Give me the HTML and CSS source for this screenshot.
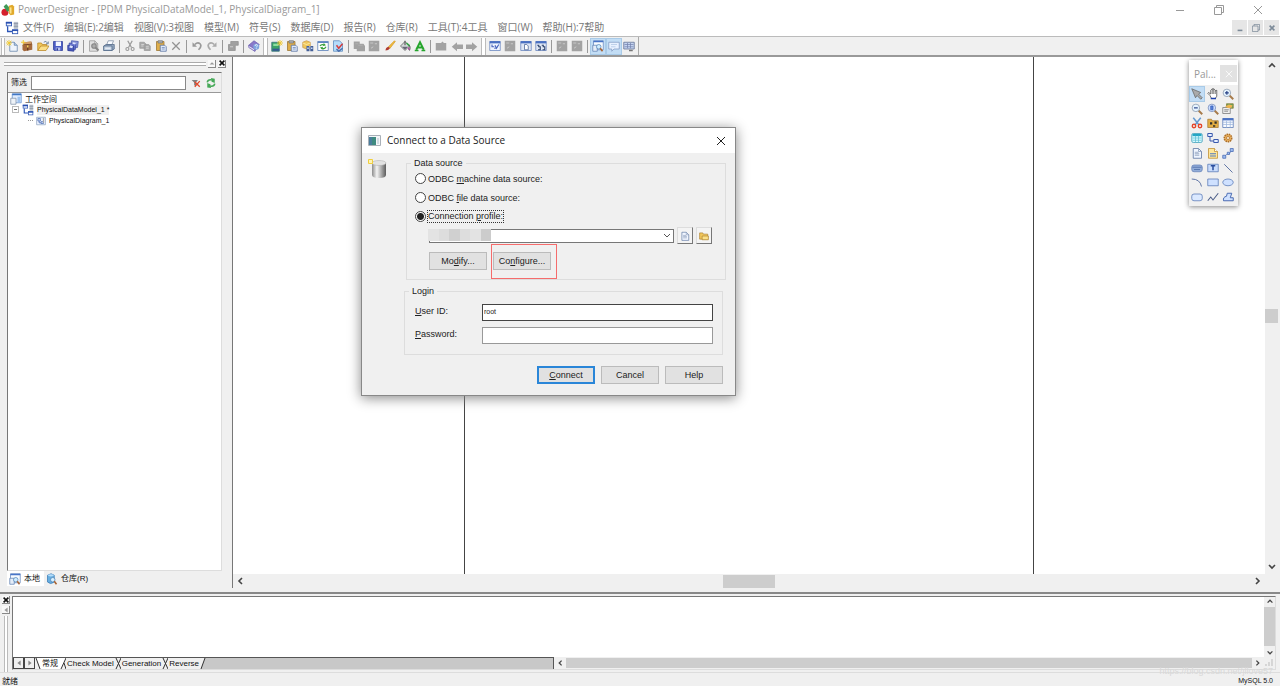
FILE: index.html
```html
<!DOCTYPE html>
<html lang="zh-CN">
<head>
<meta charset="utf-8">
<title>PowerDesigner</title>
<link rel="stylesheet" href="styles.css">
</head>
<body>
<svg class="defs" aria-hidden="true">
  <symbol id="logo" viewBox="0 0 16 16"><circle cx="4.500" cy="10.500" r="4" fill="#d5202c"/><path d="M3 4l3-3 6 7-5 2z" fill="#3f9a58"/><path d="M9 3l4-1 2 2v9l-4 1-2-2z" fill="#e0a92c"/><path d="M10 5h2v7h-2z" fill="#fbe38e"/></symbol>
  <symbol id="model" viewBox="0 0 16 16"><rect x="1.500" y="1.500" width="6" height="4" fill="#eef4ff" stroke="#3158b5"/><path d="M1 2h7" stroke="#2a50b0" stroke-width="2"/><path d="M3 6v6h5" fill="none" stroke="#2c56b8" stroke-width="1.500"/><rect x="8.500" y="10.500" width="6" height="4" fill="#fff" stroke="#3158b5"/><path d="M10 1h5v8h-5z" fill="#b9c1cc"/><path d="M10 3h5M10 6h5" stroke="#8b95a5"/><path d="M8 10.500h7" stroke="#2a50b0" stroke-width="2"/></symbol>
  <symbol id="new" viewBox="0 0 16 16"><path d="M5 3h6l4 4v8H5z" fill="#eef4fc" stroke="#6080a8"/><path d="M11 3v4h4" fill="#b8cde8" stroke="#6080a8"/><path d="M4 0v8M0 4h8M1 1l6 6M7 1L1 7" stroke="#f2cc35" stroke-width="1.200"/></symbol>
  <symbol id="chest" viewBox="0 0 16 16"><path d="M2 7l2-4 10-1 1 4v7L4 15l-2-2z" fill="#a5693c"/><path d="M3 6l11-1M9 6v8" stroke="#5b3018" stroke-width="1.500"/><path d="M4 3l9-1 1 3-11 1z" fill="#d19a63"/><path d="M3 0v6M0 3h6" stroke="#f2cc35" stroke-width="1.300"/><path d="M8 7h2v3H8z" fill="#f3ce62"/></symbol>
  <symbol id="open" viewBox="0 0 16 16"><path d="M1 14V4h5l1 2h6v3" fill="#f1c75c" stroke="#b98522"/><path d="M1 14l4-6h11l-4 6z" fill="#fbdf88" stroke="#b98522"/><path d="M9 3q3-3 5 1m1-2v3h-3" fill="none" stroke="#48658d"/></symbol>
  <symbol id="folder" viewBox="0 0 16 16"><path d="M1 13V3h5l1 2h7v8z" fill="#f1c75c" stroke="#a67a25"/><path d="M5 8h10v6H5z" fill="#fbe08a" stroke="#a67a25"/></symbol>
  <symbol id="save" viewBox="0 0 16 16"><path d="M2 2h12v12H3l-1-1z" fill="#4b5cc4" stroke="#2d3c98"/><path d="M5 2h7v6H5z" fill="#f3f6ff"/><path d="M5 10h6v4H5z" fill="#b9c3ee"/><path d="M6 11h2v3H6z" fill="#2d3c98"/></symbol>
  <symbol id="saveall" viewBox="0 0 16 16"><path d="M6 1l9 1-1 8-9 1z" fill="#8d98dc" stroke="#4655aa"/><path d="M3 4l9 1-1 8-9 1z" fill="#6b79d1" stroke="#3948a2"/><path d="M1 7l8 1v7l-8-1z" fill="#4959b9" stroke="#2d3c98"/><path d="M4 7l4 1-1 3-4-1zM8 3l4 1-1 2-4-1z" fill="#dfe6ff"/></symbol>
  <symbol id="preview" viewBox="0 0 16 16"><path d="M2 1h7l4 4v10H2z" fill="#dedede" stroke="#989898"/><path d="M9 1v4h4" fill="none" stroke="#989898"/><circle cx="8" cy="8" r="3" fill="#aaa" stroke="#858585" stroke-width="1.500"/><path d="M10 10l4 4" stroke="#858585" stroke-width="2.500"/></symbol>
  <symbol id="print" viewBox="0 0 16 16"><path d="M5 6l2-5h7l-2 5z" fill="#f8fbff" stroke="#7c8ba0"/><path d="M1 8l3-2h11v6l-3 2H1z" fill="#93a6be" stroke="#526a88"/><path d="M1 8h11v6H1z" fill="#c2d0e1" stroke="#526a88"/><path d="M3 11h7" stroke="#fff"/></symbol>
  <symbol id="cut" viewBox="0 0 16 16"><path d="M5 1l5 9M11 1L6 10" stroke="#9a9a9a" stroke-width="1.700"/><circle cx="4.500" cy="12" r="2" fill="none" stroke="#9a9a9a" stroke-width="1.500"/><circle cx="11.500" cy="12" r="2" fill="none" stroke="#9a9a9a" stroke-width="1.500"/></symbol>
  <symbol id="copy" viewBox="0 0 16 16"><path d="M1 3h6l2 2v6H1zM7 6h6l2 2v6H7z" fill="#aaa" stroke="#9a9a9a"/><path d="M3 6h4M3 8h3M9 9h4M9 11h4" stroke="#ddd"/></symbol>
  <symbol id="paste" viewBox="0 0 16 16"><path d="M2 2h10v12H2z" fill="#dfae4a" stroke="#9b7430"/><path d="M4 1h6v3H4z" fill="#aab0b8" stroke="#777"/><path d="M7 7h6l2 2v6H7z" fill="#dfe9fb" stroke="#536e9c"/><path d="M9 10h4M9 12h4" stroke="#6b87b5"/></symbol>
  <symbol id="del" viewBox="0 0 16 16"><path d="M3 3l10 10M13 3L3 13" stroke="#929292" stroke-width="1.700"/></symbol>
  <symbol id="undo" viewBox="0 0 16 16"><path d="M5 6q4-4 7-1 3 3-2 8" fill="none" stroke="#999" stroke-width="2.300"/><path d="M2 3v6h6z" fill="#999"/></symbol>
  <symbol id="redo" viewBox="0 0 16 16"><path d="M11 6Q7 2 4 5q-3 3 2 8" fill="none" stroke="#aaa" stroke-width="2.300"/><path d="M14 3v6H8z" fill="#aaa"/></symbol>
  <symbol id="prop" viewBox="0 0 16 16"><path d="M5 2h10v5h-4v7H2V6h3z" fill="#a0a0a0" stroke="#8f8f8f"/><path d="M4 9h4" stroke="#ddd"/></symbol>
  <symbol id="help" viewBox="0 0 16 16"><path d="M1 7l7-6 7 5-6 9z" fill="#8778c9" stroke="#6a5cb0"/><path d="M1 7l8 5v3L1 10z" fill="#ded8f5" stroke="#6a5cb0"/><circle cx="11" cy="9" r="4" fill="#7ea4df"/><path d="M9.500 8q0-2 1.500-2t1.500 1.500T11 9.500M11 11v1" fill="none" stroke="#fff"/></symbol>
  <symbol id="green" viewBox="0 0 16 16"><path d="M1 3h10v12H1z" fill="#3ba466" stroke="#376c79"/><path d="M3 5h7v3H3z" fill="#8ddca2"/><path d="M2 13h9" stroke="#355b91" stroke-width="3"/><path d="M12 0v8M8 4h8M9 1l6 6M15 1L9 7" stroke="#efc832" stroke-width="1.200"/></symbol>
  <symbol id="find" viewBox="0 0 16 16"><path d="M1 3l5-2 5 2v7l-5 2-5-2z" fill="#f0c85c" stroke="#c9984a"/><path d="M1 4l5 2 5-2" fill="none" stroke="#fff0b5"/><rect x="6" y="8" width="4" height="7" fill="#456098"/><rect x="11" y="8" width="4" height="7" fill="#456098"/><path d="M7 11h2M12 11h2M10 9h1" stroke="#c4d8f8" stroke-width="2"/></symbol>
  <symbol id="refresh" viewBox="0 0 16 16"><path d="M1 2h14v12H1z" fill="#fff" stroke="#5078b6"/><path d="M1 3h14" stroke="#5e86c2" stroke-width="2"/><path d="M4 8q2-3 6-1M12 9q-2 4-6 2" fill="none" stroke="#37a03c" stroke-width="1.700"/><path d="M9 4l3 3-4 1zM7 13l-3-3 4-1z" fill="#37a03c"/></symbol>
  <symbol id="check" viewBox="0 0 16 16"><path d="M2 1h8l4 4v10H2z" fill="#b5dcfa" stroke="#5887bb"/><path d="M6 7l3 4 5-6" fill="none" stroke="#d73d3d" stroke-width="2"/><path d="M6 12l3 3 5-4" fill="none" stroke="#4c70ae" stroke-width="2"/></symbol>
  <symbol id="gcopy" viewBox="0 0 16 16"><path d="M1 2h8v3h5l2 3v7H5v-3H1z" fill="#a2a2a2"/><path d="M3 5h4M7 7h6" stroke="#b4b4b4"/></symbol>
  <symbol id="gbox" viewBox="0 0 16 16"><path d="M1 1h14v14H1z" fill="#a2a2a2"/><path d="M3 4h4M9 5h3M4 11l3-2" fill="none" stroke="#d4d4d4"/></symbol>
  <symbol id="brush" viewBox="0 0 16 16"><path d="M6 9l8-8 1 1-7 9z" fill="#f4bd35" stroke="#d09a30"/><path d="M2 14q0-4 4-5l2 2q-2 3-6 3z" fill="#b13b30"/></symbol>
  <symbol id="fill" viewBox="0 0 16 16"><path d="M2 8l6-6 6 6-6 6z" fill="#d5d8db" stroke="#555"/><path d="M8 7V1M12 5q4 3 2 9" fill="none" stroke="#444" stroke-width="1.300"/><path d="M4 9h8l-4 4z" fill="#667"/><path d="M10 4l4 4" stroke="#36a948" stroke-width="2"/><path d="M12 10h2v3h-2z" fill="#b248a0"/></symbol>
  <symbol id="font" viewBox="0 0 16 16"><path d="M3 13L8 3l5 10M5 10h6" fill="none" stroke="#25a52c" stroke-width="2.600"/><path d="M1 14h5M10 14h5" stroke="#25a52c" stroke-width="2"/></symbol>
  <symbol id="gfold" viewBox="0 0 16 16"><path d="M1 4h7l2-2 2 2h3v10H1z" fill="#a2a2a2"/></symbol>
  <symbol id="gleft" viewBox="0 0 16 16"><path d="M1 9l7-6v3h8v6H8v3z" fill="#a2a2a2"/></symbol>
  <symbol id="gright" viewBox="0 0 16 16"><path d="M15 9L8 3v3H0v6h8v3z" fill="#a2a2a2"/></symbol>
  <symbol id="win1" viewBox="0 0 16 16"><path d="M1 2h14v12H1z" fill="#f0f5ff" stroke="#6583bd"/><path d="M1 3h14" stroke="#4a70c2" stroke-width="3"/><path d="M4 6v3h3M8 7l2 4 3-5M7 11h2" fill="none" stroke="#4664bd" stroke-width="1.500"/></symbol>
  <symbol id="win2" viewBox="0 0 16 16"><path d="M1 2h14v12H1z" fill="#dfe7f4" stroke="#6583bd"/><path d="M1 3h14" stroke="#4a70c2" stroke-width="3"/><path d="M6 6h3l2 2v5H6z" fill="#fff" stroke="#486394"/></symbol>
  <symbol id="win3" viewBox="0 0 16 16"><path d="M1 2h14v12H1z" fill="#dfe7f4" stroke="#6583bd"/><path d="M1 3h14" stroke="#4a70c2" stroke-width="3"/><path d="M3 7h2v2h2v4H4M9 7h2v2h2v4h-3" fill="none" stroke="#30456e" stroke-width="1.500"/></symbol>
  <symbol id="browser" viewBox="0 0 16 16"><path d="M2 1h13v12H2z" fill="#f7fbff" stroke="#6688bd"/><path d="M2 2h13" stroke="#4875c8" stroke-width="2"/><path d="M1 7h6v8H1z" fill="#e5edf8" stroke="#6081b2"/><circle cx="9" cy="9" r="3" fill="#cfecff" stroke="#5786b6"/><path d="M11 11l3 4" stroke="#a96331" stroke-width="2"/></symbol>
  <symbol id="output" viewBox="0 0 16 16"><path d="M1 3h14v9H8l-3 3v-3H1z" fill="#e8f1ff" stroke="#8199c2"/><path d="M4 6h8M4 9h6" stroke="#b0c6e4"/></symbol>
  <symbol id="list" viewBox="0 0 16 16"><path d="M1 3h14v9H1z" fill="#c5d4f0" stroke="#5d6c90"/><path d="M2 6h12M2 9h12M6 4v7M10 4v7" stroke="#7584b0"/><path d="M8 13h5v2H8z" fill="#777"/></symbol>
  <symbol id="filter" viewBox="0 0 16 16"><path d="M1 3h10L8 7v7l-3-3V7z" fill="#818181"/><path d="M6 6l8 8M14 5L6 14" stroke="#e3482a" stroke-width="2"/></symbol>
  <symbol id="sync" viewBox="0 0 16 16"><path d="M2 7q1-5 7-4M14 9q-1 5-7 4" fill="none" stroke="#46a958" stroke-width="2.500"/><path d="M8 0l6 1v7L9 6zM8 16l-6-1V8l5 2z" fill="#46a958"/></symbol>
  <symbol id="workspace" viewBox="0 0 16 16"><path d="M3 1h12v12H3z" fill="#e1eeff" stroke="#6090cf"/><path d="M3 2h12" stroke="#4077c5" stroke-width="2"/><path d="M10 5h4v7h-4z" fill="#9fc3ef"/><path d="M1 7h7v8H1z" fill="#eef3f8" stroke="#8292a8"/></symbol>
  <symbol id="diagram" viewBox="0 0 16 16"><path d="M1 2h14v12H1z" fill="#edf4ff" stroke="#7d94b5"/><path d="M3 4h4v4H3zM8 9h4v3H8zM5 8v3h3" fill="#c9daf8" stroke="#395ca9"/><path d="M12 3v8" stroke="#aaa" stroke-width="2"/></symbol>
  <symbol id="repo" viewBox="0 0 16 16"><path d="M2 3q5-4 9 0v9q-5 4-9 0z" fill="#67aee0" stroke="#397bb6"/><ellipse cx="6.500" cy="3" rx="4" ry="1.500" fill="#b6ddfa"/><circle cx="9" cy="9" r="3" fill="#d9f1ff" stroke="#5786b6"/><path d="M11 11l3 4" stroke="#a96331" stroke-width="2"/></symbol>
  <symbol id="pointer" viewBox="0 0 16 16"><path d="M1 1l12 5-3 2 5 5-2 2-5-5-2 3z" fill="#aaa" stroke="#666"/></symbol>
  <symbol id="hand" viewBox="0 0 16 16"><path d="M4 10L1 7l1-1 3 2V3l1-1 1 1V1h2v2l1-1 1 1v1l2-1v8l-2 3H6z" fill="#fff" stroke="#444"/><path d="M7 3v5M9 3v5M11 4v4" stroke="#555"/><path d="M5 13h7v2H5z" fill="#1c3faa"/></symbol>
  <symbol id="zin" viewBox="0 0 16 16"><path d="M10 10l5 5" stroke="#a77b4b" stroke-width="2.500"/><circle cx="6.500" cy="6.500" r="5" fill="#e6f4ff" stroke="#8596aa"/><path d="M4 6.500h5M6.500 4v5" stroke="#223c83" stroke-width="1.500"/></symbol>
  <symbol id="zout" viewBox="0 0 16 16"><path d="M10 10l5 5" stroke="#a77b4b" stroke-width="2.500"/><circle cx="6.500" cy="6.500" r="5" fill="#e6f4ff" stroke="#8596aa"/><path d="M4 6.500h5" stroke="#223c83" stroke-width="1.500"/></symbol>
  <symbol id="zfit" viewBox="0 0 16 16"><path d="M10 10l5 5" stroke="#a77b4b" stroke-width="2.500"/><circle cx="6.500" cy="6.500" r="5" fill="#cfe0ff" stroke="#7187b5"/><path d="M5 4h3v5H5z" fill="#5d87dc" stroke="#3159b5"/></symbol>
  <symbol id="pprop" viewBox="0 0 16 16"><path d="M6 1h9v6H6z" fill="#67a45b" stroke="#8c7c3a"/><path d="M1 6h10v8H1z" fill="#eee" stroke="#777"/><path d="M3 9h6M3 11h5" stroke="#777"/><path d="M4 5l5-3 5 1-1 3-4 1z" fill="#efb550"/></symbol>
  <symbol id="pcut" viewBox="0 0 16 16"><path d="M3 1l8 10M13 1L5 11" stroke="#669ad0" stroke-width="2"/><circle cx="4" cy="12" r="2.300" fill="none" stroke="#e44429" stroke-width="1.800"/><circle cx="12" cy="12" r="2.300" fill="none" stroke="#e44429" stroke-width="1.800"/></symbol>
  <symbol id="package" viewBox="0 0 16 16"><path d="M1 3h5l1 2h8v9H1z" fill="#e5af43" stroke="#a67a30"/><path d="M4 7h3v3H4zM10 6h3v3h-3zM8 11h3v2H8z" fill="#30302c"/></symbol>
  <symbol id="table" viewBox="0 0 16 16"><path d="M1 2h14v12H1z" fill="#f8fbff" stroke="#5577b4"/><path d="M1 3h14" stroke="#4a72c3" stroke-width="3"/><path d="M1 7h14M1 10h14M6 5v9M11 5v9" stroke="#9fb7dc"/></symbol>
  <symbol id="view" viewBox="0 0 16 16"><rect x="1" y="2" width="14" height="12" rx="2" fill="#d5faff" stroke="#3b99b6"/><path d="M2 4h12" stroke="#24a6c4" stroke-width="3"/><path d="M2 8h12M2 11h12M6 5v9M10 5v9" stroke="#62bfd5"/></symbol>
  <symbol id="link" viewBox="0 0 16 16"><path d="M4 6v6h5" fill="none" stroke="#3455ac" stroke-width="1.300"/><path d="M1 2h6v4H1zM9 10h6v4H9z" fill="#e8f0ff" stroke="#3455ac" stroke-width="1.300"/></symbol>
  <symbol id="gear" viewBox="0 0 16 16"><circle cx="8" cy="8" r="5" fill="#e8ae5c" stroke="#ad6f27" stroke-width="2" stroke-dasharray="2 1"/><circle cx="8" cy="8" r="2" fill="#fff4df" stroke="#ad6f27"/></symbol>
  <symbol id="file" viewBox="0 0 16 16"><path d="M3 2h7l4 4v9H3z" fill="#f1f6ff" stroke="#536e9c"/><path d="M10 2v4h4M5 7h5M5 9h6M5 11h6" fill="none" stroke="#8396b5"/></symbol>
  <symbol id="note" viewBox="0 0 16 16"><path d="M2 2h8l4 4v9H2z" fill="#ffe69a" stroke="#bf8c2e"/><path d="M10 2v4h4" fill="#fff" stroke="#bf8c2e"/><path d="M4 9h8M4 12h8" stroke="#527bbf" stroke-width="1.500"/></symbol>
  <symbol id="conn" viewBox="0 0 16 16"><path d="M3 13l4-4 3 0 3-5" fill="none" stroke="#6484bf"/><path d="M1 11h4v4H1zM7 7h3v3H7zM11 2h4v4h-4z" fill="#9dbcf0" stroke="#4668b1"/></symbol>
  <symbol id="titlei" viewBox="0 0 16 16"><rect x="1" y="4" width="14" height="9" rx="3" fill="#91acd8" stroke="#6480b8"/><path d="M2 7h12M4 10h8" stroke="#4a69a6"/></symbol>
  <symbol id="texti" viewBox="0 0 16 16"><path d="M1 3h14v10H1z" fill="#c9dcfb" stroke="#5577b4"/><path d="M5 5h6M8 5v6" stroke="#2a4d9e" stroke-width="2"/></symbol>
  <symbol id="line" viewBox="0 0 16 16"><path d="M3 3l11 11" stroke="#5e73a4" stroke-width="1.300"/></symbol>
  <symbol id="arc" viewBox="0 0 16 16"><path d="M1 4q11 0 13 10" fill="none" stroke="#5e73a4" stroke-width="1.300"/></symbol>
  <symbol id="rect" viewBox="0 0 16 16"><path d="M1 4h14v9H1z" fill="#cfe1ff" stroke="#5577b4"/></symbol>
  <symbol id="ell" viewBox="0 0 16 16"><ellipse cx="8" cy="8.500" rx="7" ry="4.500" fill="#cfe1ff" stroke="#5577b4"/></symbol>
  <symbol id="rrect" viewBox="0 0 16 16"><rect x="1" y="4" width="14" height="9" rx="3" fill="#dbe9ff" stroke="#5577b4"/></symbol>
  <symbol id="poly" viewBox="0 0 16 16"><path d="M1 13l4-5 3 4 7-9" fill="none" stroke="#4b5d88" stroke-width="1.400"/></symbol>
  <symbol id="polygon" viewBox="0 0 16 16"><path d="M2 13q-1-5 4-6l1-4h6l-2 6h4v4z" fill="#cfe1ff" stroke="#4668b1" stroke-width="1.300"/></symbol>
  <symbol id="x" viewBox="0 0 10 10"><path d="M1 1l8 8M9 1L1 9" stroke="currentColor" fill="none"/></symbol>
  <symbol id="xb" viewBox="0 0 10 10"><path d="M2 2l6 6M8 2L2 8" stroke="currentColor" stroke-width="2" fill="none"/></symbol>
  <symbol id="up" viewBox="0 0 10 10"><path d="M2 7l3-3 3 3" stroke="currentColor" stroke-width="1.600" fill="none"/></symbol>
  <symbol id="down" viewBox="0 0 10 10"><path d="M2 3l3 3 3-3" stroke="currentColor" stroke-width="1.600" fill="none"/></symbol>
  <symbol id="chev" viewBox="0 0 10 10"><path d="M2 3l3 3 3-3" stroke="currentColor" fill="none"/></symbol>
  <symbol id="left" viewBox="0 0 10 10"><path d="M7 2L4 5l3 3" stroke="currentColor" stroke-width="1.600" fill="none"/></symbol>
  <symbol id="right" viewBox="0 0 10 10"><path d="M3 2l3 3-3 3" stroke="currentColor" stroke-width="1.600" fill="none"/></symbol>
  <symbol id="tl" viewBox="0 0 10 10"><path d="M7 2v6L3 5z" fill="currentColor"/></symbol>
  <symbol id="tr" viewBox="0 0 10 10"><path d="M3 2v6l4-3z" fill="currentColor"/></symbol>
  <symbol id="tu" viewBox="0 0 10 10"><path d="M2 7h6L5 4z" fill="currentColor"/></symbol>
  <symbol id="min" viewBox="0 0 10 10"><path d="M1 5.500h8" stroke="currentColor"/></symbol>
  <symbol id="minb" viewBox="0 0 10 10"><path d="M2 8h6" stroke="currentColor" stroke-width="2"/></symbol>
  <symbol id="restore" viewBox="0 0 10 10"><path d="M.5 2.500h7v7h-7zM2.500 2.500v-2h7v7h-2" stroke="currentColor" fill="none"/></symbol>
</svg>

<header class="titlebar">
  <svg class="i16"><use href="#logo"/></svg>
  <h1 class="app-title">PowerDesigner - [PDM PhysicalDataModel_1, PhysicalDiagram_1]</h1>
  <div class="win-controls">
    <button aria-label="最小化"><svg class="i10"><use href="#min"/></svg></button>
    <button aria-label="还原"><svg class="i10"><use href="#restore"/></svg></button>
    <button aria-label="关闭"><svg class="i10"><use href="#x"/></svg></button>
  </div>
</header>

<nav class="menubar">
  <svg class="i16"><use href="#model"/></svg>
  <button>文件(F)</button><button>编辑(E):2编辑</button><button>视图(V):3视图</button><button>模型(M)</button><button>符号(S)</button><button>数据库(D)</button><button>报告(R)</button><button>仓库(R)</button><button>工具(T):4工具</button><button>窗口(W)</button><button>帮助(H):7帮助</button>
  <div class="child-controls">
    <button aria-label="最小化"><svg class="i8"><use href="#minb"/></svg></button>
    <button aria-label="还原"><svg class="i8"><use href="#restore"/></svg></button>
    <button aria-label="关闭"><svg class="i8"><use href="#xb"/></svg></button>
  </div>
</nav>

<div class="toolbar">
  <span class="grip first"></span>
  <div class="group n5"><button><svg><use href="#new"/></svg></button><button><svg><use href="#chest"/></svg></button><button><svg><use href="#open"/></svg></button><button><svg><use href="#save"/></svg></button><button><svg><use href="#saveall"/></svg></button></div>
  <span class="sep"></span>
  <div class="group n2"><button><svg><use href="#preview"/></svg></button><button><svg><use href="#print"/></svg></button></div>
  <span class="sep"></span>
  <div class="group n4"><button><svg><use href="#cut"/></svg></button><button><svg><use href="#copy"/></svg></button><button><svg><use href="#paste"/></svg></button><button><svg><use href="#del"/></svg></button></div>
  <span class="sep"></span>
  <div class="group n2"><button><svg><use href="#undo"/></svg></button><button><svg><use href="#redo"/></svg></button></div>
  <span class="sep"></span>
  <div class="group"><button><svg><use href="#prop"/></svg></button></div>
  <span class="sep"></span>
  <div class="group"><button><svg><use href="#help"/></svg></button></div>
  <span class="grip"></span>
  <div class="group n5"><button><svg><use href="#green"/></svg></button><button><svg><use href="#paste"/></svg></button><button><svg><use href="#find"/></svg></button><button><svg><use href="#refresh"/></svg></button><button><svg><use href="#check"/></svg></button></div>
  <span class="sep"></span>
  <div class="group n5"><button><svg><use href="#gcopy"/></svg></button><button><svg><use href="#gbox"/></svg></button><button><svg><use href="#brush"/></svg></button><button><svg><use href="#fill"/></svg></button><button><svg><use href="#font"/></svg></button></div>
  <span class="sep"></span>
  <div class="group n3"><button><svg><use href="#gfold"/></svg></button><button><svg><use href="#gleft"/></svg></button><button><svg><use href="#gright"/></svg></button></div>
  <span class="grip"></span>
  <div class="group n4"><button><svg><use href="#win1"/></svg></button><button><svg><use href="#gbox"/></svg></button><button><svg><use href="#win2"/></svg></button><button><svg><use href="#win3"/></svg></button></div>
  <span class="sep"></span>
  <div class="group n2"><button><svg><use href="#gbox"/></svg></button><button><svg><use href="#gbox"/></svg></button></div>
  <span class="sep"></span>
  <div class="group n3"><button class="on"><svg><use href="#browser"/></svg></button><button class="on"><svg><use href="#output"/></svg></button><button><svg><use href="#list"/></svg></button></div>
  <span class="bar-end"></span>
</div>

<main class="workarea">
  <aside class="browser-pane">
    <div class="pane-head"><span class="pane-grip"></span><button aria-label="收起"><svg class="i8"><use href="#tu"/></svg></button><button aria-label="关闭"><svg class="i8"><use href="#xb"/></svg></button></div>
    <div class="tree-box">
      <div class="filter-row">
        <label for="filter-text">筛选</label><input id="filter-text" type="text">
        <button aria-label="清除筛选"><svg class="i10"><use href="#filter"/></svg></button><button aria-label="刷新"><svg class="i10"><use href="#sync"/></svg></button>
      </div>
      <ul class="tree">
        <li><svg class="i12"><use href="#workspace"/></svg><span class="cjk">工作空间</span></li>
        <li class="lv1"><span class="expander"></span><svg class="i12"><use href="#model"/></svg><span class="sel">PhysicalDataModel_1 *</span></li>
        <li class="lv2"><span class="branch"></span><svg class="i10"><use href="#diagram"/></svg><span>PhysicalDiagram_1</span></li>
      </ul>
    </div>
    <div class="pane-tabs">
      <button class="active"><svg class="i12"><use href="#browser"/></svg>本地</button><button><svg class="i12"><use href="#repo"/></svg>仓库(R)</button>
    </div>
  </aside>

  <section class="canvas">
    <div class="sheet-area"><div class="sheet"></div></div>
    <div class="vscroll"><svg class="i10"><use href="#up"/></svg><span class="thumb"></span><svg class="i10"><use href="#down"/></svg></div>
    <div class="hscroll"><svg class="i10"><use href="#left"/></svg><span class="thumb"></span><svg class="i10"><use href="#right"/></svg></div>
  </section>
</main>

<section class="output-pane">
  <div class="output-side"><button aria-label="关闭"><svg class="i8"><use href="#xb"/></svg></button><button aria-label="收起"><svg class="i8"><use href="#tl"/></svg></button><span class="side-grip"></span></div>
  <div class="output-box">
    <div class="output-text"></div>
    <div class="output-vscroll"><svg class="i8"><use href="#up"/></svg><span class="thumb"></span><svg class="i8"><use href="#down"/></svg></div>
    <div class="output-foot">
      <div class="sheet-tabs">
        <button class="nav" aria-label="上一个"><svg class="i8"><use href="#tl"/></svg></button><button class="nav" aria-label="下一个"><svg class="i8"><use href="#tr"/></svg></button>
        <svg class="slash" viewBox="0 0 6 11"><path d="M0 0h6v11H6z" fill="#fff"/><path d="M1 0l4 11" stroke="#333"/></svg><button class="tab cur">常规</button><svg class="slash" viewBox="0 0 6 11"><path d="M0 0h6L1 11H0z" fill="#fff"/><path d="M6 0L1 11M4 5l2 6" stroke="#333"/></svg><button class="tab">Check Model</button><svg class="slash" viewBox="0 0 6 11"><path d="M6 0L1 11M1 0l5 11" stroke="#333"/></svg><button class="tab">Generation</button><svg class="slash" viewBox="0 0 6 11"><path d="M6 0L1 11M1 0l5 11" stroke="#333"/></svg><button class="tab">Reverse</button><svg class="slash last" viewBox="0 0 6 11"><path d="M0 0h5L1 11H0z" fill="#f0f0f0"/><path d="M5 0L1 11" stroke="#333"/></svg>
      </div>
      <div class="output-hscroll"><svg class="i8"><use href="#left"/></svg><span class="thumb"></span><svg class="i8"><use href="#right"/></svg></div>
    </div>
    <svg class="sizer" viewBox="0 0 10 10"><path d="M2 7v2M5 5v4M8 2v7" stroke="#bbb"/></svg>
  </div>
</section>

<footer class="statusbar"><span class="cjk">就绪</span><span class="dbms">MySQL 5.0</span></footer>
<div class="watermark">https://blog.csdn.net/jllove57</div>

<aside class="palette">
  <div class="palette-head"><span>Pal...</span><button aria-label="关闭"><svg class="i8"><use href="#x"/></svg></button></div>
  <div class="palette-grid">
    <button class="on"><svg><use href="#pointer"/></svg></button><button><svg><use href="#hand"/></svg></button><button><svg><use href="#zin"/></svg></button>
    <button><svg><use href="#zout"/></svg></button><button><svg><use href="#zfit"/></svg></button><button><svg><use href="#pprop"/></svg></button>
    <button><svg><use href="#pcut"/></svg></button><button><svg><use href="#package"/></svg></button><button><svg><use href="#table"/></svg></button>
    <button><svg><use href="#view"/></svg></button><button><svg><use href="#link"/></svg></button><button><svg><use href="#gear"/></svg></button>
    <button><svg><use href="#file"/></svg></button><button><svg><use href="#note"/></svg></button><button><svg><use href="#conn"/></svg></button>
    <button><svg><use href="#titlei"/></svg></button><button><svg><use href="#texti"/></svg></button><button><svg><use href="#line"/></svg></button>
    <button><svg><use href="#arc"/></svg></button><button><svg><use href="#rect"/></svg></button><button><svg><use href="#ell"/></svg></button>
    <button><svg><use href="#rrect"/></svg></button><button><svg><use href="#poly"/></svg></button><button><svg><use href="#polygon"/></svg></button>
  </div>
</aside>

<form class="dialog" role="dialog" aria-label="Connect to a Data Source">
  <div class="dialog-head">
    <svg class="dialog-icon" viewBox="0 0 13 11"><path d="M.5.5h12v10H.5z" fill="#f4f6f8" stroke="#a9b0b8"/><path d="M1 2h7v8H1z" fill="#3f8a80"/><path d="M1 2h3v8H1z" fill="#4a7d9c"/><path d="M9 3h2v6H9z" fill="#d3dbe3"/></svg>
    <h2>Connect to a Data Source</h2>
    <button type="button" aria-label="关闭"><svg class="i10"><use href="#x"/></svg></button>
  </div>
  <div class="dialog-main">
    <svg class="db" viewBox="0 0 19 22"><defs><linearGradient id="cyl"><stop offset="0" stop-color="#8c8c8c"/><stop offset=".35" stop-color="#f4f4f4"/><stop offset="1" stop-color="#5c5c5c"/></linearGradient></defs><path d="M4 5v12q0 3 7 3t7-3V5z" fill="url(#cyl)"/><ellipse cx="11" cy="5" rx="7" ry="2.500" fill="#e2e2e2" stroke="#aaa" stroke-width=".5"/><path d="M.500 1.500h4v4h-4z" fill="#fdf3b5" stroke="#f0cf3e"/></svg>
    <div class="dialog-fields">
      <fieldset class="source">
        <legend>Data source</legend>
        <label class="radio"><input type="radio" name="src"><span>ODBC <u>m</u>achine data source:</span></label>
        <label class="radio"><input type="radio" name="src"><span>ODBC <u>f</u>ile data source:</span></label>
        <label class="radio"><input type="radio" name="src" checked><span class="focus">Connection <u>p</u>rofile:</span></label>
        <div class="profile-row">
          <div class="combo"><select aria-label="Connection profile"><option></option></select><svg class="i10"><use href="#chev"/></svg><span class="mosaic"><i></i><i></i><i></i><i></i><i></i><i></i></span></div>
          <button type="button" class="pick" aria-label="选择文件"><svg class="i10"><use href="#file"/></svg></button><button type="button" class="pick" aria-label="选择目录"><svg class="i10"><use href="#folder"/></svg></button>
        </div>
        <div class="config-row"><button type="button" class="btn">Mo<u>d</u>ify...</button><span class="marked"><button type="button" class="btn">Co<u>n</u>figure...</button></span></div>
      </fieldset>
      <fieldset class="login">
        <legend>Login</legend>
        <label for="uid"><span><u>U</u>ser ID:</span></label><input id="uid" class="strong" type="text" value="root">
        <label for="pwd"><span><u>P</u>assword:</span></label><input id="pwd" type="password">
      </fieldset>
    </div>
  </div>
  <div class="dialog-actions"><button type="button" class="btn default"><u>C</u>onnect</button><button type="button" class="btn">Cancel</button><button type="button" class="btn">Help</button></div>
</form>
</body>
</html>
```
FILE: styles.css
```css
* { box-sizing: border-box; }
html, body { height: 100%; }
body {
  margin: 0;
  position: relative;
  display: flex;
  flex-direction: column;
  overflow: hidden;
  background: #f0f0f0;
  color: #111;
  font: 8px/12px "Liberation Sans", "Noto Sans CJK SC", sans-serif;
}
button { display: flex; align-items: center; justify-content: center; margin: 0; padding: 0; border: 0; background: none; color: inherit; font: inherit; white-space: nowrap; }
input, select { margin: 0; border-radius: 0; font: inherit; }
svg { display: block; flex: none; }
.defs { position: absolute; width: 0; height: 0; }
.i8 { width: 8px; height: 8px; }
.i10 { width: 10px; height: 10px; }
.i12 { width: 12px; height: 12px; }
.i16 { width: 14px; height: 14px; }
.cjk { font-family: "Noto Sans CJK SC", sans-serif; }

/* Title and menu */
.titlebar { display: flex; align-items: center; height: 19px; padding: 0 3px 0 1px; gap: 3px; background: #fff; color: #999; }
.app-title { flex: 1; margin: 0; font: 10px/19px "Open Sans", sans-serif; }
.win-controls { display: flex; }
.win-controls button { width: 39px; height: 19px; }
.menubar { display: flex; align-items: center; height: 17px; padding-left: 5px; background: #fff; color: #777; font: 10px/17px "Open Sans", "Noto Sans CJK SC", sans-serif; }
.menubar > button { margin-right: 10px; }
.menubar > svg { margin-right: 4px; }
.child-controls { display: flex; gap: 1px; margin-left: auto; padding-right: 1px; color: #7d8b99; }
.child-controls button { width: 15px; height: 15px; background: #e6e6e6; }

/* Toolbar */
.toolbar { display: flex; align-items: center; height: 21px; border-top: 1px solid #bbb; border-bottom: 2px solid #999; }
.group { display: flex; justify-content: space-between; }
.group button { width: 14px; height: 15px; }
.group svg { width: 12px; height: 12px; }
.group .on, .palette .on { background: #c2ddf5; box-shadow: 0 0 0 1px #a9cbe8; }
.n2 { width: 29px; }
.n3 { width: 45px; }
.n4 { width: 60px; }
.n5 { width: 75px; }
.sep { width: 1px; height: 13px; margin: 0 3px; background: #999; }
.grip { width: 5px; height: 17px; margin: 0 2px; border: 1px solid #bbb; border-width: 0 1px; background: #fff; }
.grip.first { width: 4px; margin: 0 0 0 1px; }
.bar-end { width: 1px; height: 18px; margin-left: 2px; background: #aaa; }

/* Work area */
.workarea { flex: 1; display: flex; min-height: 0; border-bottom: 4px solid #f0f0f0; }
.browser-pane { display: flex; flex-direction: column; width: 233px; padding: 0 10px 0 7px; border-right: 1px solid #777; }
.pane-head { display: flex; align-items: center; height: 13px; gap: 2px; margin-right: -4px; }
.pane-grip { flex: 1; height: 4px; margin-left: -3px; border: 1px solid #aaa; border-width: 1px 0; background: #fff; }
.pane-head button, .output-side button { width: 8px; height: 8px; border-right: 1px solid #888; border-bottom: 1px solid #888; background: #f8f8f8; }
.pane-head button:first-of-type { color: #999; }
.tree-box { flex: 1; display: flex; flex-direction: column; margin-top: 2px; border: 1px solid #777; border-right-color: #ddd; border-bottom-color: #ddd; background: #fff; }
.filter-row { display: flex; align-items: center; height: 20px; padding: 0 5px 0 3px; border-bottom: 1px solid #999; background: #f0f0f0; }
.filter-row input { flex: 1; min-width: 0; height: 14px; margin-left: 4px; border: 1px solid #888; background: #fff; }
.filter-row button { margin-left: 5px; }
.tree { margin: 0; padding: 0 0 0 2px; list-style: none; font-size: 7px; }
.tree li { display: flex; align-items: center; height: 11px; gap: 3px; }
.tree .cjk { font-size: 8px; }
.tree .lv1 { padding-left: 2px; }
.tree .lv2 { padding-left: 18px; }
.expander { width: 7px; height: 7px; border: 1px solid #bbb; background: linear-gradient(#777, #777) center / 3px 1px no-repeat; }
.branch { width: 5px; height: 1px; border-top: 1px dotted #999; }
.sel { background: #f0f0f0; line-height: 10px; }
.pane-tabs { display: flex; height: 17px; padding-bottom: 2px; }
.pane-tabs button { gap: 3px; padding: 0 4px 0 2px; }
.pane-tabs .active { background: #fff; }

.canvas { flex: 1; display: grid; grid-template: 1fr 14px / 1fr 15px; min-width: 0; }
.sheet-area { display: flex; justify-content: center; background: #fff; }
.sheet { width: 55.3%; border: solid #444; border-width: 0 1px; }
.vscroll { display: flex; flex-direction: column; align-items: center; justify-content: space-between; padding: 3px 2px 2px 0; color: #444; }
.vscroll .thumb { width: 13px; height: 14px; background: #cdcdcd; }
.hscroll { display: flex; align-items: center; justify-content: space-between; padding: 0 2px; color: #444; }
.hscroll .thumb { width: 52px; height: 13px; background: #cdcdcd; }

/* Output */
.output-pane { display: flex; height: 80px; padding: 2px 4px 0 2px; border-top: 2px solid #888; }
.output-side { display: flex; flex-direction: column; width: 10px; gap: 2px; }
.side-grip { flex: 1; width: 4px; margin-left: 2px; border: 1px solid #bbb; border-width: 0 1px; background: #fff; }
.output-side button:last-of-type { color: #999; }
.output-box { flex: 1; display: grid; grid-template: 1fr 12px / 1fr 11px; margin-bottom: 2px; border: 1px solid #777; border-right-color: #ddd; border-bottom-color: #ddd; }
.output-text { background: #fff; }
.output-vscroll { display: flex; flex-direction: column; align-items: center; color: #444; }
.output-vscroll .thumb { flex: 1; width: 100%; margin: 2px 0 3px; background: #cdcdcd; }
.output-foot { display: flex; min-width: 0; }
.sheet-tabs { display: flex; width: 541px; border-top: 1px solid #555; border-right: 1px solid #555; background: #c8c8c8; }
.sheet-tabs .nav { width: 11px; border: 1px solid #444; border-top: 0; background: #f0f0f0; color: #888; }
.tab { height: 11px; padding: 0 1px; background: #f0f0f0; }
.tab.cur { padding-right: 2px; background: #fff; }
.slash { width: 6px; height: 11px; background: #f0f0f0; }
.slash.last { background: none; }
.output-hscroll { flex: 1; display: flex; align-items: center; padding: 0 2px; gap: 2px; color: #444; }
.output-hscroll .thumb { flex: 1; height: 10px; background: #cdcdcd; }
.sizer { width: 10px; height: 10px; }

.statusbar { display: flex; align-items: flex-end; justify-content: space-between; height: 14px; padding: 0 7px 0 2px; border-top: 1px solid #ddd; line-height: 11px; }
.dbms { font-size: 7px; line-height: 10px; }
.watermark { position: absolute; right: 7px; bottom: 10px; color: #d8d8d8; font-size: 9px; line-height: 10px; }

/* Palette */
.palette { position: absolute; top: 60px; right: 42px; width: 49px; background: #f0f0f0; box-shadow: 0 1px 5px #888; }
.palette-head { display: flex; align-items: center; justify-content: space-between; height: 25px; padding: 4px 1px 2px 5px; background: #fff; color: #999; font: 10px/18px "Open Sans", sans-serif; }
.palette-head button { width: 17px; height: 17px; background: #e2e2e2; color: #fff; }
.palette-grid { display: grid; grid-template-columns: repeat(3, 14px); justify-content: space-between; align-content: space-between; height: 121px; padding: 2px 3px 2px 1px; }
.palette-grid button { height: 14px; }
.palette-grid svg { width: 12px; height: 12px; }

/* Dialog */
.dialog { position: absolute; top: 127px; left: 361px; width: 375px; padding-bottom: 11px; border: 1px solid #888; background: #f0f0f0; box-shadow: 0 2px 12px #888; font-size: 9px; color: #222; }
.dialog-head { display: flex; align-items: center; height: 25px; padding: 0 9px 0 6px; gap: 6px; background: #fff; color: #222; }
.dialog-icon { width: 13px; height: 11px; }
.dialog h2 { flex: 1; margin: 0; font: 10px/25px "Open Sans", sans-serif; }
.dialog-main { display: flex; gap: 16px; padding: 5px 9px 0 6px; }
.db { width: 19px; height: 22px; }
.dialog-fields { flex: 1; min-width: 0; display: flex; flex-direction: column; gap: 6px; }
fieldset { min-width: 0; margin: 0; padding: 0; border: 1px solid #ddd; }
legend { padding: 0 3px; line-height: 11px; }
.source { margin-left: 3px; padding: 0 13px 0 8px; }
.source legend { margin-left: -4px; }
.login { display: grid; grid-template-columns: 67px 1fr; row-gap: 6px; align-items: start; margin: 0 3px 0 1px; padding: 7px 9px 10px 10px; }
.login label { padding-top: 1px; }
.login legend { margin-left: -6px; }
.login input { width: 100%; height: 17px; padding: 0 1px 2px; border: 1px solid #999; background: #fff; font-size: 7px; color: #222; }
.login input.strong { border-color: #444; }
.radio { display: flex; align-items: center; height: 19px; gap: 1px; }
.radio input { appearance: none; width: 11px; height: 11px; margin-right: 1px; border: 1px solid #444; border-radius: 50%; background: #fff; }
.radio input:checked { background: radial-gradient(#222 0 3px, #fff 4px); }
.focus { outline: 1px dotted #333; line-height: 11px; }
.profile-row { display: flex; align-items: center; margin: 1px 0 0 14px; gap: 3px; }
.combo { position: relative; flex: 1; }
.combo select { display: block; appearance: none; width: 100%; height: 14px; border: 1px solid #777; background: #fff; }
.combo svg { position: absolute; right: 2px; top: 2px; color: #555; }
.mosaic { position: absolute; left: -1px; top: 0; display: flex; width: 63px; height: 12px; }
.mosaic i { flex: 1; background: #ddd; }
.mosaic i:nth-child(1), .mosaic i:nth-child(5) { background: #e3e3e3; }
.mosaic i:nth-child(3) { background: #d0d0d0; }
.mosaic i:nth-child(6) { background: #ccc; }
.pick { width: 16px; height: 17px; border: 1px solid #777; border-top-color: #ddd; border-left-color: #ddd; background: #f4f4f4; }
.config-row { display: flex; margin-left: 14px; gap: 4px; }
.config-row > .btn { margin-top: 8px; }
.marked { width: 66px; height: 35px; padding: 7px 0 0 1px; border: 1px solid #f56c6c; }
.btn { width: 58px; height: 18px; border: 1px solid #bbb; background: #e1e1e1; }
.btn.default { border: 2px solid #2a86d8; }
.btn u, label u { text-underline-offset: 1px; }
.dialog-actions { display: flex; justify-content: flex-end; gap: 6px; padding: 11px 12px 0 0; }
```
